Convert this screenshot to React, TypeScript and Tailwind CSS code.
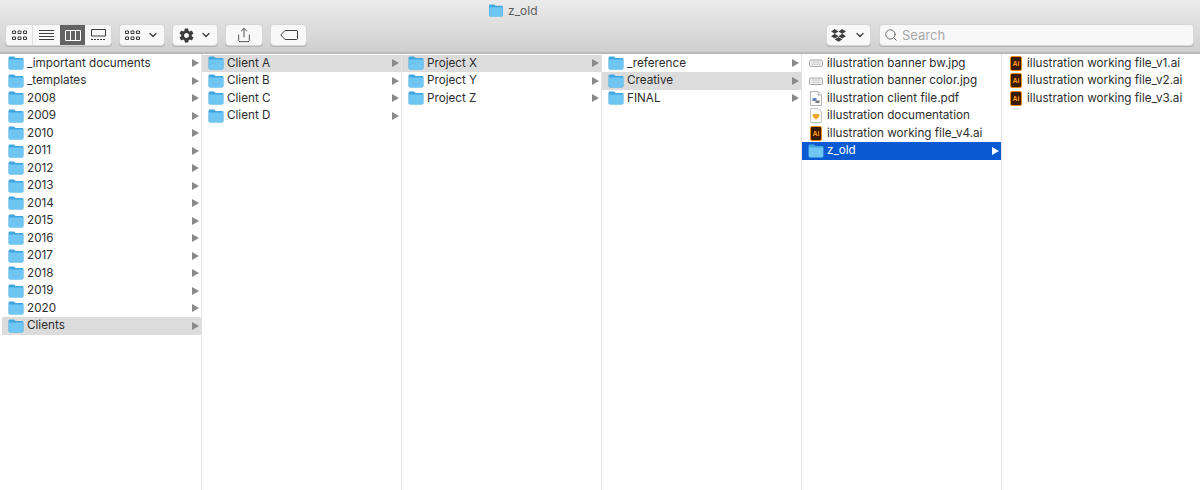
import { ChevronDown, Search, Share } from "lucide-react";
import { IoMdSettings } from "react-icons/io";

type Kind = "folder" | "ai" | "jpg" | "pdf" | "sketch";
type Row = { name: string; kind?: Kind; state?: "on" | "active" };

function FolderIcon({ small }: { small?: boolean }) {
  return (
    <svg viewBox="0 0 16 14" className={small ? "h-[13px] w-[16px]" : "h-[14px] w-[16px]"}>
      <path d="M.5 2.200C.5 1.200 1.100.6 2 .6h3.600c.7 0 1 .3 1.400.8l.5.6h6.600c.9 0 1.400.6 1.400 1.500v8.600c0 .9-.6 1.400-1.400 1.400H2c-.9 0-1.500-.5-1.500-1.400z" fill="#3fa6de" />
      <path d="M.9 3.600h14.200v8.500c0 .7-.4 1.100-1.100 1.100H2c-.7 0-1.100-.4-1.100-1.100z" fill="#6fc6f3" />
    </svg>
  );
}

function AiIcon() {
  return (
    <div className="flex h-[15px] w-[12px] items-center justify-center rounded-[2px] border-[1.5px] border-[#f08c00] bg-[#3a1a00] font-['Liberation_Sans',sans-serif] text-[7px] leading-none font-bold text-[#ff9c1a]">
      Ai
    </div>
  );
}

function JpgIcon() {
  return (
    <svg viewBox="0 0 14 14" className="h-[14px] w-[14px]">
      <rect x="0.5" y="4" width="13" height="6.500" rx="1.500" fill="#f3f3f3" stroke="#a8a8a8" />
      <path d="M2.500 6h9M2.500 8.200h9" stroke="#c6c6c6" />
    </svg>
  );
}

function PdfIcon() {
  return (
    <svg viewBox="0 0 12 15" className="h-[15px] w-[12px]">
      <path d="M.5.500h7.500l3.500 3.500v10.500H.5z" fill="#fbfbfb" stroke="#b5b5b5" />
      <path d="M8 .500V4h3.500" fill="#e6e6e6" stroke="#b5b5b5" />
      <rect x="2.500" y="7" width="4" height="3" fill="#5f84bd" />
      <rect x="5.500" y="9.500" width="4" height="2.500" fill="#7c7c7c" />
    </svg>
  );
}

function SketchIcon() {
  return (
    <svg viewBox="0 0 12 15" className="h-[15px] w-[12px]">
      <path d="M.5.500h7.500l3.500 3.500v10.500H.5z" fill="#fbfbfb" stroke="#c4c4c4" />
      <path d="M3.500 6h5l1.300 1.800L6 11.800 2.200 7.800z" fill="#f5a623" />
    </svg>
  );
}

function RowIcon({ kind }: { kind: Kind }) {
  if (kind === "ai") return <AiIcon />;
  if (kind === "jpg") return <JpgIcon />;
  if (kind === "pdf") return <PdfIcon />;
  if (kind === "sketch") return <SketchIcon />;
  return <FolderIcon />;
}

function FileRow({ row }: { row: Row }) {
  const kind = row.kind ?? "folder";
  const active = row.state === "active";
  const on = row.state === "on";
  return (
    <div
      className={
        "flex h-[17.5px] items-center " +
        (active ? "bg-[#0a5bd3] text-white " : on ? "bg-[#dcdcdc] " : "")
      }
    >
      <div className="flex w-[25px] shrink-0 items-center justify-center pl-[3px]">
        <RowIcon kind={kind} />
      </div>
      <span className="grow truncate pt-[1px]">{row.name}</span>
      {kind === "folder" && (
        <div
          className={
            "mr-[2px] h-0 w-0 border-y-[4px] border-l-[7px] border-y-transparent " +
            (active ? "border-l-white" : "border-l-[#8a8a8a]")
          }
        />
      )}
    </div>
  );
}

const years = ["2008", "2009", "2010", "2011", "2012", "2013", "2014", "2015", "2016", "2017", "2018", "2019", "2020"];

const columns: Row[][] = [
  [
    { name: "_important documents" },
    { name: "_templates" },
    ...years.map((name) => ({ name })),
    { name: "Clients", state: "on" as const },
  ],
  [{ name: "Client A", state: "on" }, { name: "Client B" }, { name: "Client C" }, { name: "Client D" }],
  [{ name: "Project X", state: "on" }, { name: "Project Y" }, { name: "Project Z" }],
  [{ name: "_reference" }, { name: "Creative", state: "on" }, { name: "FINAL" }],
  [
    { name: "illustration banner bw.jpg", kind: "jpg" },
    { name: "illustration banner color.jpg", kind: "jpg" },
    { name: "illustration client file.pdf", kind: "pdf" },
    { name: "illustration documentation", kind: "sketch" },
    { name: "illustration working file_v4.ai", kind: "ai" },
    { name: "z_old", state: "active" },
  ],
  [
    { name: "illustration working file_v1.ai", kind: "ai" },
    { name: "illustration working file_v2.ai", kind: "ai" },
    { name: "illustration working file_v3.ai", kind: "ai" },
  ],
];

const btn = "flex h-[22px] items-center justify-center rounded-[4px] border border-[#d6d6d6] bg-[#f8f8f8] text-[#3c3c3c] shadow-[0_1px_0_#b4b4b4]";

function GridGlyph({ color = "#3c3c3c" }: { color?: string }) {
  return (
    <svg viewBox="0 0 15 11" className="h-[11px] w-[15px]" fill="none" stroke={color}>
      <path d="M.5 1h3v2.500h-3zM6 1h3v2.500H6zM11.500 1h3v2.500h-3zM.5 7h3v2.500h-3zM6 7h3v2.500H6zM11.500 7h3v2.500h-3z" />
    </svg>
  );
}

function ViewButtons() {
  return (
    <div className={btn + " w-[107px] overflow-hidden"}>
      <div className="flex h-full w-[28px] items-center justify-center border-r border-[#dddddd]">
        <GridGlyph />
      </div>
      <div className="flex h-full w-[27px] items-center justify-center">
        <svg viewBox="0 0 15 11" className="h-[11px] w-[15px]" stroke="#3c3c3c">
          <path d="M0 .5h15M0 3.500h15M0 6.500h15M0 9.500h15" />
        </svg>
      </div>
      <div className="flex h-full w-[26px] items-center justify-center bg-[#636363]">
        <svg viewBox="0 0 16 11" className="h-[11px] w-[16px]" fill="none" stroke="#ffffff">
          <path d="M.5.500h15v10H.5zM5.500.500v10M10.500.500v10" />
        </svg>
      </div>
      <div className="flex h-full w-[26px] items-center justify-center">
        <svg viewBox="0 0 15 12" className="h-[12px] w-[15px]" fill="none" stroke="#3c3c3c">
          <path d="M.5.500h14v6.500H.5z" />
          <path d="M0 10.500h15" strokeDasharray="2 1" />
        </svg>
      </div>
    </div>
  );
}

export default function App() {
  return (
    <div className="flex h-[490px] w-[1200px] flex-col overflow-hidden bg-white font-['Inter',sans-serif] text-[11.7px] text-[#2e2e2e]">
      <div className="h-[54px] shrink-0 border-b-2 border-[#b9b9b9] bg-gradient-to-b from-[#ebebeb] to-[#cfcfcf] px-[5px]">
        <div className="flex h-[24px] items-center gap-[4px] pb-[3px] pl-[483px] text-[12px] text-[#5c5c5c]">
          <FolderIcon small />
          <span>z_old</span>
        </div>
        <div className="flex justify-between pr-[1px]">
          <div className="flex gap-[7px]">
            <ViewButtons />
            <div className={btn + " w-[46px] gap-[7px]"}>
              <GridGlyph />
              <ChevronDown size={12} strokeWidth={2.5} />
            </div>
            <div className={btn + " w-[46px] gap-[5px]"}>
              <IoMdSettings size={17} />
              <ChevronDown size={12} strokeWidth={2.5} />
            </div>
            <div className={btn + " w-[38px]"}>
              <Share size={16} strokeWidth={1.3} />
            </div>
            <div className={btn + " w-[37px]"}>
              <svg viewBox="0 0 18 10" className="h-[10px] w-[18px]" fill="none" stroke="#3c3c3c">
                <path d="M5 .500h11.500c.6 0 1 .4 1 1v7c0 .6-.4 1-1 1H5L.8 5z" />
              </svg>
            </div>
          </div>
          <div className="flex gap-[8px]">
            <div className={btn + " w-[45px] gap-[8px]"}>
              <svg viewBox="0 0 16 14" className="h-[13px] w-[15px]" fill="#3c3c3c">
                <path d="M4 0 0 2.600l4 2.500L8 2.600zM12 0 8 2.600l4 2.500 4-2.500zM0 7.700l4 2.600 4-2.600-4-2.600zM12 5.100 8 7.700l4 2.600 4-2.600zM4 11.200 8 13.800l4-2.600-4-2.500z" />
              </svg>
              <ChevronDown size={12} strokeWidth={2.5} />
            </div>
            <div className={btn + " w-[315px] justify-start gap-[4px] pl-[4px] text-[#a9a9a9]"}>
              <Search size={14} strokeWidth={1.5} className="text-[#5c5c5c]" />
              <span className="pt-[1px] text-[13px]">Search</span>
            </div>
          </div>
        </div>
      </div>
      <div className="flex grow">
        {columns.map((rows, i) => (
          <div
            key={i}
            className={
              "shrink-0 border-r border-[#e4e4e4] pt-[0.5px] last:border-r-0 " +
              (i === 0 ? "w-[202px] pl-[2px] " : i === 5 ? "w-[198px] " : "w-[200px] ")
            }
          >
            {rows.map((row) => (
              <FileRow key={row.name} row={row} />
            ))}
          </div>
        ))}
      </div>
    </div>
  );
}
